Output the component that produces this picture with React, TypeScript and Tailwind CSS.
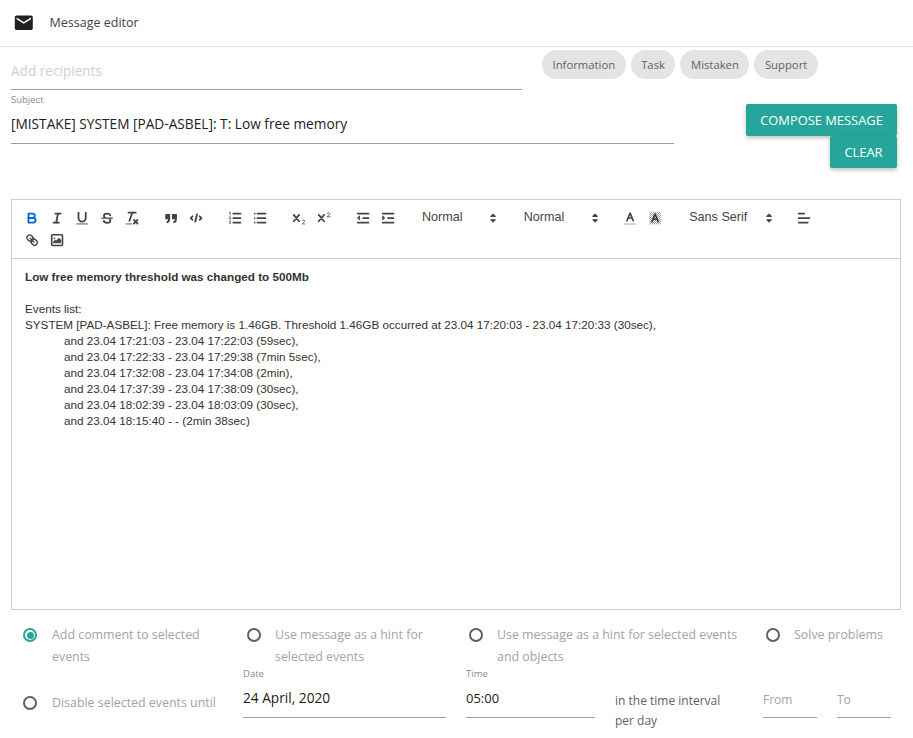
const UI_FONT = "font-['Open_Sans','Noto_Sans',sans-serif]";

const EVENT_LINES = [
  "and 23.04 17:21:03 - 23.04 17:22:03 (59sec),",
  "and 23.04 17:22:33 - 23.04 17:29:38 (7min 5sec),",
  "and 23.04 17:32:08 - 23.04 17:34:08 (2min),",
  "and 23.04 17:37:39 - 23.04 17:38:09 (30sec),",
  "and 23.04 18:02:39 - 23.04 18:03:09 (30sec),",
  "and 23.04 18:15:40 - - (2min 38sec)",
];

function Icon({ children, color = "#444" }: { children: React.ReactNode; color?: string }) {
  return (
    <button type="button" className="flex h-[22px] w-[25.2px] items-center justify-center">
      <svg
        viewBox="0 0 18 18"
        className="h-[16.2px] w-[16.2px]"
        fill="none"
        stroke={color}
        strokeWidth="2"
        strokeLinecap="round"
        strokeLinejoin="round"
      >
        {children}
      </svg>
    </button>
  );
}

function Picker({ label, width }: { label: string; width: string }) {
  return (
    <div className={`relative mr-[13.5px] flex h-[22px] items-center pl-[8px] ${width}`}>
      <span className="relative top-[-1px] font-['Liberation_Sans',Arial,sans-serif] text-[12.6px] text-[#444]">
        {label}
      </span>
      <svg viewBox="0 0 18 18" className="absolute right-[1px] top-[3px] h-[16.2px] w-[16.2px]" fill="#444">
        <polygon points="6.5 10.8 9 13.3 11.5 10.8" stroke="#444" strokeWidth="1.2" strokeLinejoin="round" />
        <polygon points="6.5 7.2 9 4.7 11.5 7.2" stroke="#444" strokeWidth="1.2" strokeLinejoin="round" />
      </svg>
    </div>
  );
}

function Toolbar() {
  return (
    <div className="border-b border-[#ccc] pb-[7px] pl-[7px] pt-[7px]">
      <div className="flex">
        <div className="mr-[13.5px] flex">
          <Icon color="#06c">
            <path d="M5,4H9.5A2.5,2.5,0,0,1,12,6.5v0A2.5,2.5,0,0,1,9.5,9H5V4Z" />
            <path d="M5,9h5.5A2.5,2.5,0,0,1,13,11.5v0A2.5,2.5,0,0,1,10.5,14H5V9Z" />
          </Icon>
          <Icon>
            <line x1="7" x2="13" y1="4" y2="4" />
            <line x1="5" x2="11" y1="14" y2="14" />
            <line x1="8" x2="10" y1="14" y2="4" />
          </Icon>
          <Icon>
            <path d="M5,3V9a4,4,0,0,0,4,4h0a4,4,0,0,0,4-4V3" />
            <line x1="3" x2="15" y1="15.5" y2="15.5" strokeWidth="1" />
          </Icon>
          <Icon>
            <line x1="3" x2="15" y1="9" y2="9" strokeWidth="1.2" />
            <path d="M12.5,6C12,4.6,10.7,4,9,4,7,4,5.5,5,5.5,6.5c0,.7.3,1.2.8,1.6M12,10.4c.4.4.6.9.6,1.5C12.6,13.4,11,14.3,9,14.3c-1.9,0-3.3-.8-3.7-2.3" />
          </Icon>
          <Icon>
            <line x1="5" x2="13" y1="3" y2="3" />
            <line x1="6" x2="9.35" y1="12" y2="3" />
            <line x1="11" x2="15" y1="11" y2="15" />
            <line x1="15" x2="11" y1="11" y2="15" />
            <line x1="2.5" x2="8.5" y1="15.5" y2="15.5" strokeWidth="1" />
          </Icon>
        </div>
        <div className="mr-[13.5px] flex">
          <Icon>
            <path
              stroke="none"
              fill="#444"
              d="M2.5,4.5H8V10C8,12.6,6.8,14.2,4.4,14.8L3.6,13C4.9,12.6,5.6,11.7,5.7,10.4H2.5ZM10,4.5H15.5V10C15.5,12.6,14.3,14.2,11.9,14.8L11.1,13C12.4,12.6,13.1,11.7,13.2,10.4H10Z"
            />
          </Icon>
          <Icon>
            <polyline points="5 7 3 9 5 11" />
            <polyline points="13 7 15 9 13 11" />
            <line x1="10" x2="8" y1="5" y2="13" />
          </Icon>
        </div>
        <div className="mr-[13.5px] flex">
          <Icon>
            <line x1="7" x2="15" y1="4" y2="4" />
            <line x1="7" x2="15" y1="9" y2="9" />
            <line x1="7" x2="15" y1="14" y2="14" />
            <path
              strokeWidth="0.9"
              d="M2.5,3 3.5,2.5V5.5M2.5,7.7C3,7 4.3,7.3 4,8.2L2.5,10H4.3M2.6,12.6H4.1L3.2,13.7C4.5,13.7 4.5,15.6 2.6,15.2"
            />
          </Icon>
          <Icon>
            <line x1="6" x2="15" y1="4" y2="4" />
            <line x1="6" x2="15" y1="9" y2="9" />
            <line x1="6" x2="15" y1="14" y2="14" />
            <line x1="3" x2="3" y1="4" y2="4" />
            <line x1="3" x2="3" y1="9" y2="9" />
            <line x1="3" x2="3" y1="14" y2="14" />
          </Icon>
        </div>
        <div className="mr-[13.5px] flex">
          <Icon>
            <path d="M3,5.5 9,12.5M9,5.5 3,12.5" />
            <path strokeWidth="0.9" d="M12.5,11.8C12.8,10.4 15.2,10.6 15.1,12.2 15,13.4 13.3,14.4 12.5,15.5H15.5" />
          </Icon>
          <Icon>
            <path d="M3,5.5 9,12.5M9,5.5 3,12.5" />
            <path strokeWidth="0.9" d="M12.5,3.8C12.8,2.4 15.2,2.6 15.1,4.2 15,5.4 13.3,6.4 12.5,7.5H15.5" />
          </Icon>
        </div>
        <div className="mr-[13.5px] flex">
          <Icon>
            <line x1="3" x2="15" y1="14" y2="14" />
            <line x1="3" x2="15" y1="4" y2="4" />
            <line x1="9" x2="15" y1="9" y2="9" />
            <polygon points="5 7 5 11 3 9" fill="#444" strokeWidth="1" />
          </Icon>
          <Icon>
            <line x1="3" x2="15" y1="14" y2="14" />
            <line x1="3" x2="15" y1="4" y2="4" />
            <line x1="9" x2="15" y1="9" y2="9" />
            <polygon points="3 7 3 11 5 9" fill="#444" strokeWidth="1" />
          </Icon>
        </div>
        <Picker label="Normal" width="w-[88.2px]" />
        <Picker label="Normal" width="w-[88.2px]" />
        <div className="mr-[13.5px] flex">
          <Icon>
            <line x1="3" x2="15" y1="15.5" y2="15.5" stroke="#aaa" strokeWidth="1.2" />
            <polyline points="5.5 12 9 3.5 12.5 12" strokeWidth="1.8" />
            <line x1="6.8" x2="11.2" y1="9" y2="9" strokeWidth="1.6" />
          </Icon>
          <Icon>
            <defs>
              <pattern id="dither" width="2.222" height="2.222" patternUnits="userSpaceOnUse">
                <rect width="1.111" height="1.111" fill="#999" stroke="none" />
                <rect x="1.111" y="1.111" width="1.111" height="1.111" fill="#999" stroke="none" />
              </pattern>
            </defs>
            <rect x="2.5" y="2" width="13" height="14" fill="url(#dither)" stroke="none" />
            <polyline points="5.5 13 9 4.5 12.5 13" strokeWidth="1.8" stroke="#333" />
            <line x1="6.8" x2="11.2" y1="10" y2="10" strokeWidth="1.6" stroke="#333" />
          </Icon>
        </div>
        <Picker label="Sans Serif" width="w-[97.2px]" />
        <Icon>
          <line x1="3" x2="15" y1="9" y2="9" />
          <line x1="3" x2="13" y1="14" y2="14" />
          <line x1="3" x2="9" y1="4" y2="4" />
        </Icon>
      </div>
      <div className="flex">
        <Icon>
          <line x1="7" x2="11" y1="7" y2="11" strokeWidth="1.6" />
          <path
            strokeWidth="1.6"
            d="M8.9,4.577a3.476,3.476,0,0,1,.36,4.679A3.476,3.476,0,0,1,4.577,8.9C3.185,7.5,2.035,6.4,4.217,4.217S7.5,3.185,8.9,4.577Z"
          />
          <path
            strokeWidth="1.6"
            d="M13.423,9.1a3.476,3.476,0,0,0-4.679-.36,3.476,3.476,0,0,0,.36,4.679c1.392,1.392,2.5,2.542,4.679.36S14.815,10.5,13.423,9.1Z"
          />
        </Icon>
        <Icon>
          <rect x="3" y="3" width="12" height="12" rx="1" strokeWidth="1.8" />
          <circle cx="6" cy="7" r="1" fill="#444" stroke="none" />
          <polyline points="5 12 5 11 7 9 8 10 11 7 13 9 13 12 5 12" fill="#444" strokeWidth="1" />
        </Icon>
      </div>
    </div>
  );
}

function Radio({ checked = false }: { checked?: boolean }) {
  return (
    <span
      className={[
        "mt-[4px] flex h-[14px] w-[14px] shrink-0 items-center justify-center rounded-full border-2",
        checked ? "border-[#26a69a]" : "border-[#616161]",
      ].join(" ")}
    >
      {checked && <span className="h-[7px] w-[7px] rounded-full bg-[#26a69a]" />}
    </span>
  );
}

function Option({
  label,
  width,
  labelWidth,
  checked,
}: {
  label: string;
  width: string;
  labelWidth: string;
  checked?: boolean;
}) {
  return (
    <div className={`flex shrink-0 gap-[14px] ${width}`}>
      <Radio checked={checked} />
      <span className={`text-[12.4px] leading-[22px] text-[#a3a3a3] ${labelWidth}`}>{label}</span>
    </div>
  );
}

function DateField({
  label,
  value,
  width,
  size,
}: {
  label: string;
  value: string;
  width: string;
  size: string;
}) {
  return (
    <div className={`flex h-[51px] shrink-0 flex-col border-b border-[#9e9e9e] ${width}`}>
      <span className="text-[9.5px] leading-[14px] text-[#8a8a8a]">{label}</span>
      <span className={`mt-[7px] leading-[20px] text-[#212121] ${size}`}>{value}</span>
    </div>
  );
}

export default function App() {
  return (
    <div className={`${UI_FONT} h-[738px] w-[913px] overflow-hidden bg-white`}>
      <header className="flex h-[47px] items-center border-b border-[#e0e0e0] pl-[13px]">
        <svg viewBox="0 0 24 24" className="h-[21.6px] w-[21.6px]" fill="#212121">
          <path d="M20 4H4c-1.1 0-1.99.9-1.99 2L2 18c0 1.1.9 2 2 2h16c1.1 0 2-.9 2-2V6c0-1.1-.9-2-2-2zm0 4l-8 5-8-5V6l8 5 8-5v2z" />
        </svg>
        <span className="ml-[15px] text-[12.5px] text-[#424242]">Message editor</span>
      </header>

      <div className="flex pl-[11px]">
        <div className="h-[43px] w-[511px] border-b border-[#9e9e9e] pt-[14px] text-[13.6px] leading-[20px] text-[#d0d0d0]">
          Add recipients
        </div>
        <div className="ml-[20px] mt-[3px] flex h-[29px] gap-[5px]">
          {["Information", "Task", "Mistaken", "Support"].map((chip) => (
            <span
              key={chip}
              className="flex items-center rounded-full bg-[#e4e4e4] px-[10.5px] pt-[1px] text-[11.3px] text-[#616161]"
            >
              {chip}
            </span>
          ))}
        </div>
      </div>

      <div className="flex pl-[11px] pr-[16px]">
        <div className="h-[54px] w-[663px] border-b border-[#9e9e9e]">
          <div className="pt-[3px] text-[9.5px] leading-[14px] text-[#8a8a8a]">Subject</div>
          <div className="mt-[7px] text-[13.7px] leading-[20px] text-[#212121]">
            [MISTAKE] SYSTEM [PAD-ASBEL]: T: Low free memory
          </div>
        </div>
        <div className="ml-auto flex flex-col items-end pt-[14px]">
          <button
            type="button"
            className="flex h-[32px] w-[151px] items-center justify-center rounded-[2px] bg-[#26a69a] pt-[1px] text-[12.9px] text-white shadow-[0_2px_4px_rgba(0,0,0,0.25)]"
          >
            COMPOSE MESSAGE
          </button>
          <button
            type="button"
            className="flex h-[32px] w-[67px] items-center justify-center rounded-[2px] bg-[#26a69a] pt-[1px] text-[12.9px] text-white shadow-[0_2px_4px_rgba(0,0,0,0.25)]"
          >
            CLEAR
          </button>
        </div>
      </div>

      <div className="ml-[11px] mt-[31px] flex h-[411px] w-[890px] flex-col border border-[#ccc]">
        <Toolbar />
        <div className="px-[13px] pt-[10px] font-['Liberation_Sans',Arial,sans-serif] text-[11.7px] leading-[16px] text-[#333]">
          <p className="font-bold">Low free memory threshold was changed to 500Mb</p>
          <p className="h-[16px]" />
          <p>Events list:</p>
          <p>
            SYSTEM [PAD-ASBEL]: Free memory is 1.46GB. Threshold 1.46GB occurred at 23.04 17:20:03 - 23.04 17:20:33
            (30sec),
          </p>
          {EVENT_LINES.map((line) => (
            <p key={line} className="pl-[39px]">
              {line}
            </p>
          ))}
        </div>
      </div>

      <div className="flex pl-[23px] pt-[14px]">
        <Option label="Add comment to selected events" width="w-[224px]" labelWidth="w-[161px] pl-[1px]" checked />
        <Option label="Use message as a hint for selected events" width="w-[222px]" labelWidth="w-[170px]" />
        <Option label="Use message as a hint for selected events and objects" width="w-[297px]" labelWidth="w-[245px]" />
        <Option label="Solve problems" width="w-[120px]" labelWidth="w-[100px]" />
      </div>

      <div className="-mt-px flex items-start pl-[23px]">
        <div className="w-[220px] shrink-0 pt-[25px]">
          <Option label="Disable selected events until" width="w-[220px]" labelWidth="w-[181px] pl-[1px]" />
        </div>
        <DateField label="Date" value="24 April, 2020" width="w-[203px]" size="text-[13.7px]" />
        <div className="w-[20px] shrink-0" />
        <DateField label="Time" value="05:00" width="w-[129px]" size="text-[13px]" />
        <div className="ml-[20px] w-[148px] shrink-0 pr-[25px] pt-[24px] text-[12px] leading-[20px] text-[#616161]">
          in the time interval per day
        </div>
        <div className="flex gap-[20px] pt-[20px]">
          <div className="h-[31px] w-[54px] border-b border-[#9e9e9e] pt-[3px] text-[12px] leading-[20px] text-[#a3a3a3]">
            From
          </div>
          <div className="h-[31px] w-[54px] border-b border-[#9e9e9e] pt-[3px] text-[12px] leading-[20px] text-[#a3a3a3]">
            To
          </div>
        </div>
      </div>
    </div>
  );
}
